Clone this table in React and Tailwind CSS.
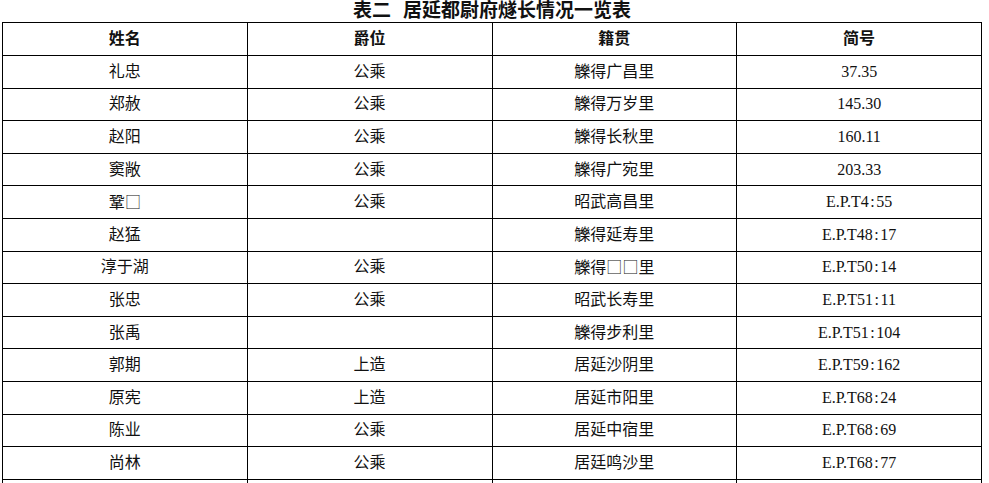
import React from "react";

const rows = [
  ["礼忠", "公乘", "觻得广昌里", "37.35"],
  ["郑赦", "公乘", "觻得万岁里", "145.30"],
  ["赵阳", "公乘", "觻得长秋里", "160.11"],
  ["窦敞", "公乘", "觻得广宛里", "203.33"],
  ["鞏□", "公乘", "昭武高昌里", "E.P.T4:55"],
  ["赵猛", "", "觻得延寿里", "E.P.T48:17"],
  ["淳于湖", "公乘", "觻得□□里", "E.P.T50:14"],
  ["张忠", "公乘", "昭武长寿里", "E.P.T51:11"],
  ["张禹", "", "觻得步利里", "E.P.T51:104"],
  ["郭期", "上造", "居延沙阴里", "E.P.T59:162"],
  ["原宪", "上造", "居延市阳里", "E.P.T68:24"],
  ["陈业", "公乘", "居延中宿里", "E.P.T68:69"],
  ["尚林", "公乘", "居廷鸣沙里", "E.P.T68:77"],
  ["", "", "", ""],
];

const font = { fontFamily: '"Liberation Serif", "Noto Sans CJK SC", serif' };
const cjk = { fontFamily: '"Noto Sans CJK SC", sans-serif' };

// □ and the colon need their own spacing to look like the printed table
function Cell({ text }) {
  if (text.includes(":")) {
    const [a, b] = text.split(":");
    return (
      <>
        {a}
        <span className="mx-[1.5px]">:</span>
        {b}
      </>
    );
  }
  const parts = text.split(/(□)/);
  return parts.map((p, i) =>
    p === "□" ? (
      <span key={i} style={cjk} className="font-light">□</span>
    ) : (
      p
    )
  );
}

export default function App() {
  return (
    <div className="w-[989px] h-[483px] overflow-hidden bg-white text-[#111]" style={font}>
      <div className="ml-[2px] w-[980px] h-[22px] text-center text-[19px] leading-[22px] font-bold">
        表二<span className="inline-block w-[12px]"></span>居延都尉府燧长情况一览表
      </div>
      <table className="ml-[2px] w-[980px] table-fixed border-collapse">
        <thead>
          <tr>
            {["姓名", "爵位", "籍贯", "简号"].map((h) => (
              <th key={h} className="border border-black h-[33px] p-0 text-center text-[16px] font-bold leading-none">
                {h}
              </th>
            ))}
          </tr>
        </thead>
        <tbody>
          {rows.map((row, idx) => (
            <tr key={idx}>
              {row.map((cell, i) => (
                <td key={i} className="border border-black h-[32.6px] p-0 text-center text-[16px] font-normal leading-none">
                  <Cell text={cell} />
                </td>
              ))}
            </tr>
          ))}
        </tbody>
      </table>
    </div>
  );
}
